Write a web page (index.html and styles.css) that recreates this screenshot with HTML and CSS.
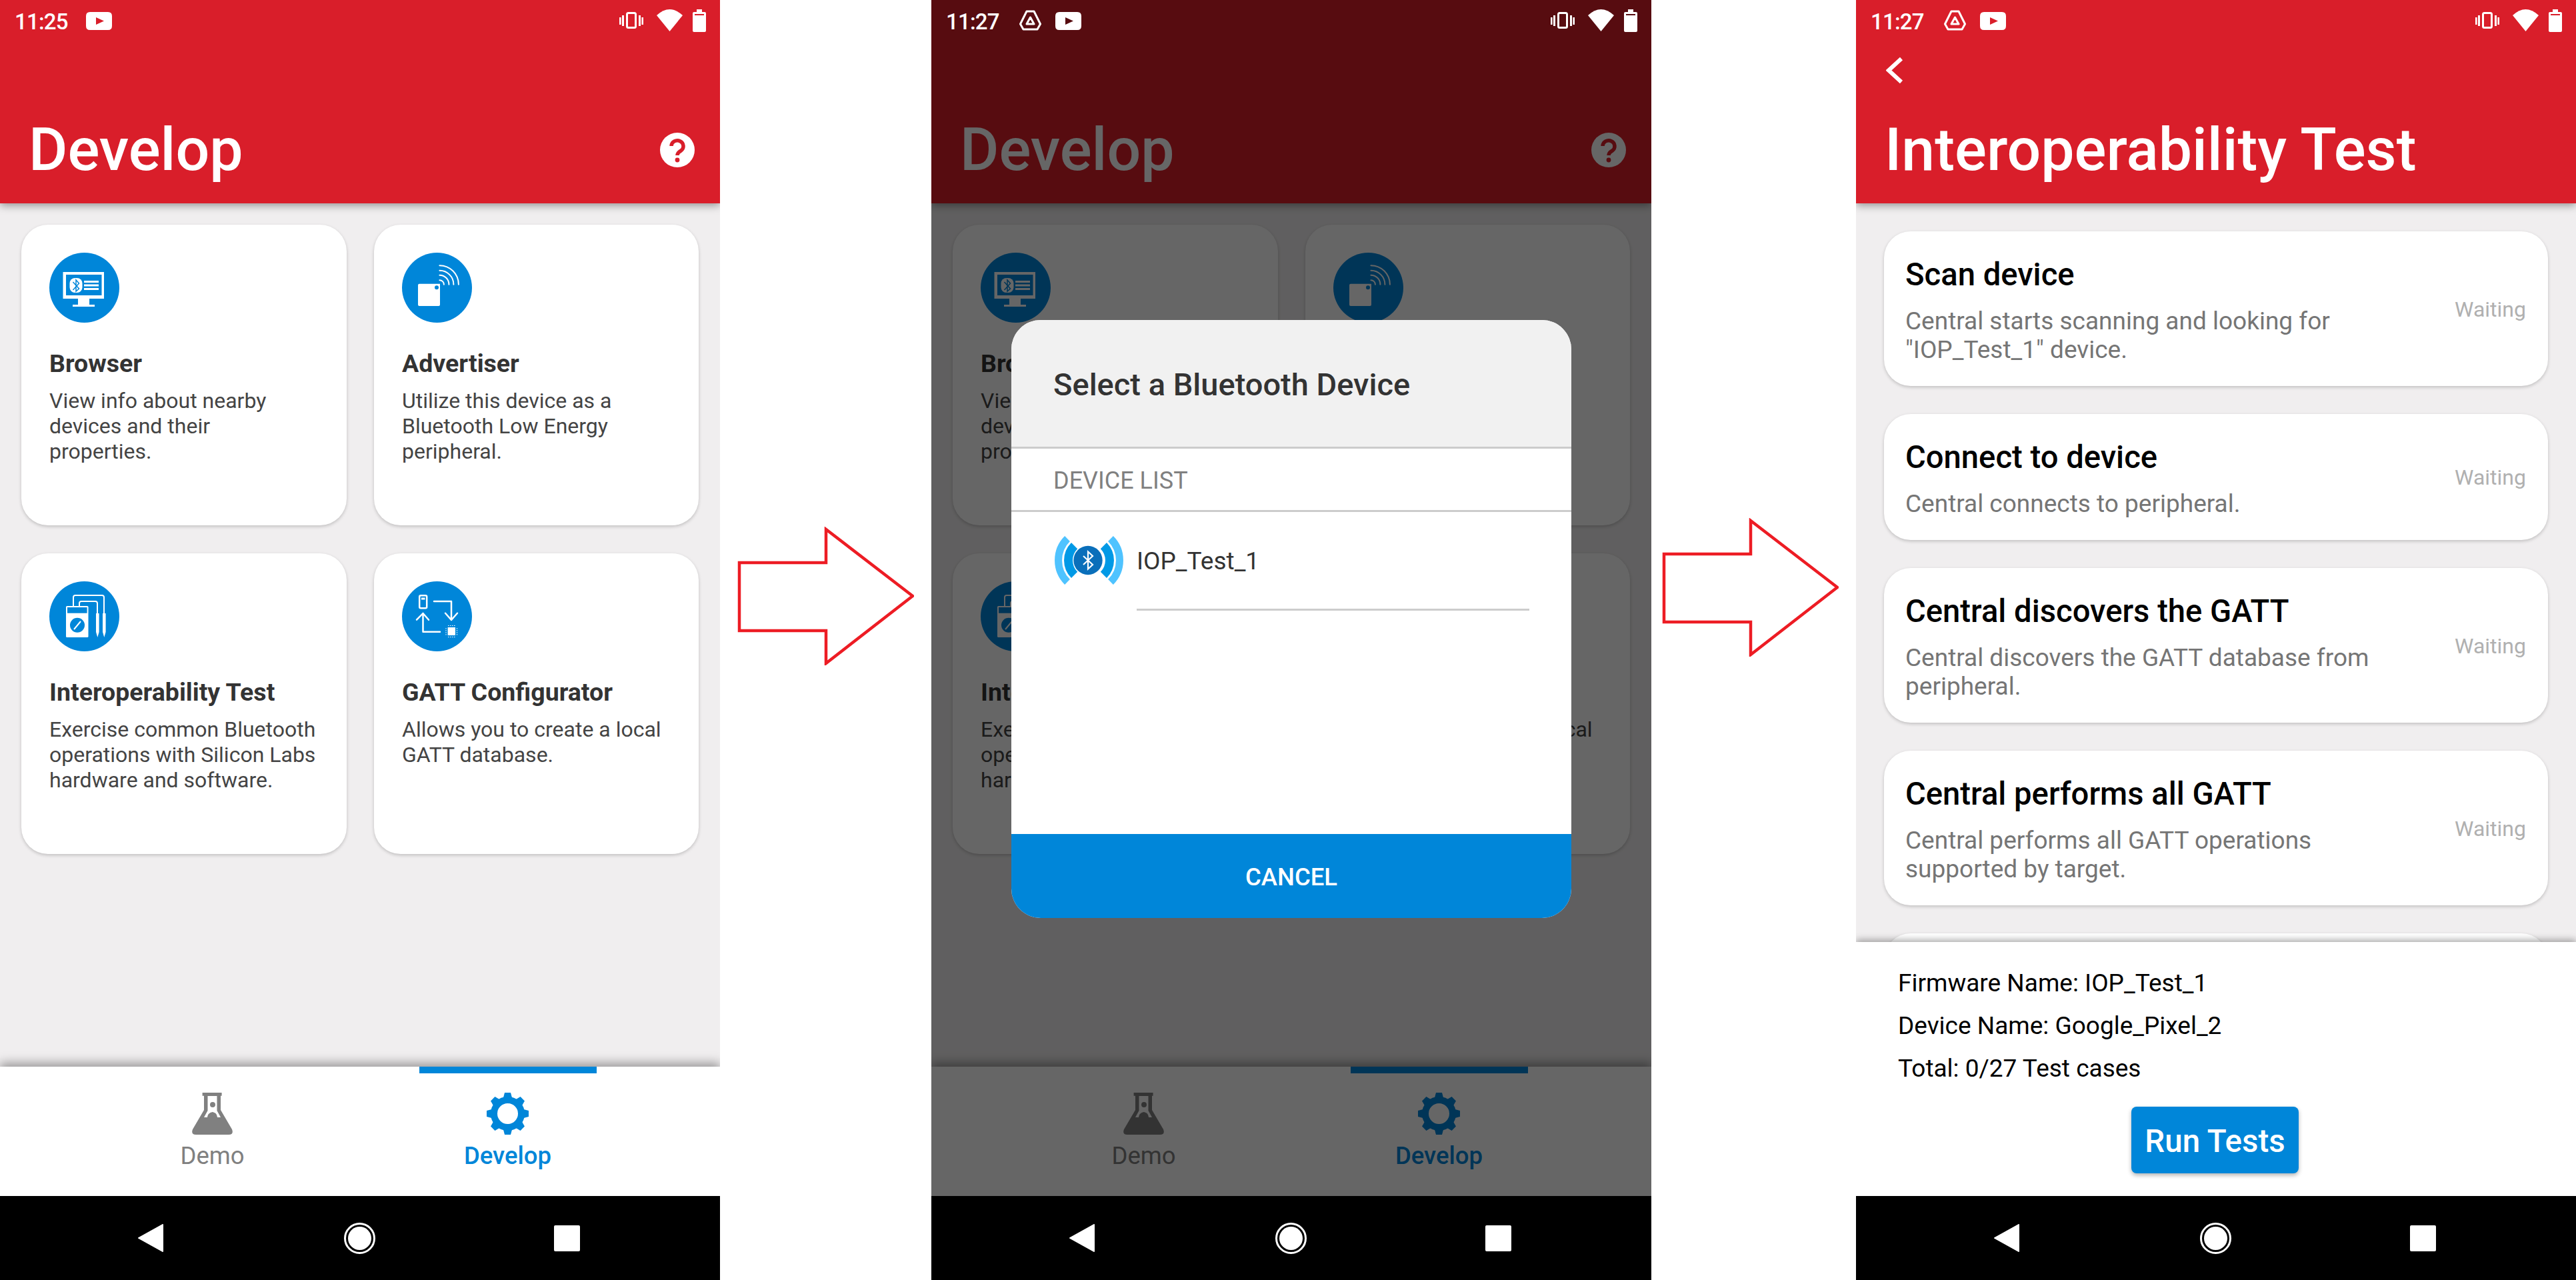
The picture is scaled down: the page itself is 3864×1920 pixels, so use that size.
FILE: index.html
```html
<!DOCTYPE html>
<html lang="en">
<head>
    <meta charset="UTF-8">
    <title>EFR Connect - Interoperability Test</title>
    <link rel="stylesheet" href="styles.css">
</head>
<body>
    <!-- icons used more than once -->
    <svg class="sprite" xmlns="http://www.w3.org/2000/svg">
        <symbol id="i-youtube" viewBox="0 0 39 27">
            <path fill="#fff" fill-rule="evenodd" d="M6 0H33Q39 0 39 6V21Q39 27 33 27H6Q0 27 0 21V6Q0 0 6 0ZM15 8V19L27 13.5Z"/>
        </symbol>
        <symbol id="i-drive" viewBox="0 0 33 31">
            <path fill="none" stroke="#fff" stroke-width="3" stroke-linejoin="round" d="M11 2H22L31.5 21L27 29H6L1.5 21ZM16.5 11L22 21H11Z"/>
        </symbol>
        <symbol id="i-vibrate" viewBox="0 0 36 25">
            <rect x="11.5" y="1.5" width="13" height="22" rx="2" fill="none" stroke="#fff" stroke-width="3"/>
            <path fill="#fff" d="M0 8H2.6V19H0ZM4 5H7V21H4ZM29 5H32V21H29ZM33.4 8H36V19H33.4Z"/>
        </symbol>
        <symbol id="i-wifi" viewBox="0 0 39 33">
            <path fill="#fff" d="M0 9Q19.500-9 39 9L19.500 33Z"/>
        </symbol>
        <symbol id="i-battery" viewBox="0 0 20 34">
            <path fill="#fff" fill-rule="evenodd" d="M6 0H14V4H18Q20 4 20 6V32Q20 34 18 34H2Q0 34 0 32V6Q0 4 2 4H6ZM3 7V9H17V7Z"/>
        </symbol>
        <symbol id="i-browser" viewBox="0 0 105 105">
            <circle cx="52.500" cy="52.500" r="52.500" fill="#0086d9"/>
            <path fill="#fff" fill-rule="evenodd" d="M20.500 29H82V69H60V78H68V81H35V78H43V69H20.500ZM25 33V64H78.500V33Z"/>
            <rect x="30.500" y="38" width="19" height="22" rx="8" fill="#fff"/>
            <path fill="none" stroke="#0086d9" stroke-width="1.500" d="M35.500 44L44.500 54L40 58V41L44.500 46L35.500 56"/>
            <path fill="#fff" d="M52 42H74V45H52ZM52 47.500H74V50.500H52ZM52 53H74V56H52Z"/>
        </symbol>
        <symbol id="i-advertiser" viewBox="0 0 105 105">
            <circle cx="52.500" cy="52.500" r="52.500" fill="#0086d9"/>
            <path fill="#fff" fill-rule="evenodd" d="M26 46.700H57V78Q57 80 55 80H26Q24 80 24 78V48.700Q24 46.700 26 46.700ZM52 49.200A3 3 0 1 0 52 55.200A3 3 0 1 0 52 49.200Z"/>
            <path fill="none" stroke="#fff" stroke-width="2" stroke-linecap="round" d="M56.400 41.200A6.500 6.500 0 0 1 62.900 47.700M56.400 33.700A14 14 0 0 1 70.400 47.700M56.400 26.700A21 21 0 0 1 77.400 47.700M56.400 19.200A28.500 28.500 0 0 1 84.900 47.700"/>
        </symbol>
        <symbol id="i-meter" viewBox="0 0 105 105">
            <circle cx="52.500" cy="52.500" r="52.500" fill="#0086d9"/>
            <path fill="none" stroke="#fff" stroke-width="2" d="M36 37V24Q36 21 39 21H79Q82 21 82 24V48M45 37V33Q45 30 48 30H69Q72 30 72 33V48"/>
            <rect x="25" y="37" width="33.500" height="47" rx="1.500" fill="#fff"/>
            <rect x="27" y="39" width="29.600" height="8.700" fill="#0086d9"/>
            <circle cx="42" cy="65.700" r="11" fill="#0086d9"/>
            <path stroke="#fff" stroke-width="2" d="M37 72L47 60"/>
            <path fill="#fff" d="M70 48H74.600V76L72.300 84L70 76ZM80 48H84.600V76L82.300 84L80 76Z"/>
        </symbol>
        <symbol id="i-gatt" viewBox="0 0 105 105">
            <circle cx="52.500" cy="52.500" r="52.500" fill="#0086d9"/>
            <rect x="26.200" y="21.200" width="11" height="19" rx="2" fill="none" stroke="#fff" stroke-width="2.500"/>
            <rect x="29" y="24.500" width="5.500" height="3" fill="#fff"/>
            <path fill="none" stroke="#fff" stroke-width="2.500" stroke-linecap="round" stroke-linejoin="round" d="M48 30H74V57.500M65 47.700L74 58L83 47.700M57 75.700H31.500V48M22 57.700L31.500 48L40 57.700"/>
            <rect x="68.600" y="69" width="11.400" height="12" fill="#fff"/>
            <path stroke="#fff" stroke-width="1" stroke-dasharray="1.500 1.500" d="M69 66.500H80M69 83.500H80M66 70V81M82.500 70V81"/>
        </symbol>
    </svg>

    <div class="page">
        <!-- Develop screen -->
        <section class="phone">
            <header class="appbar">
                <div class="statusbar">
                    <span class="clock">11:25</span>
                    <svg class="si-youtube"><use href="#i-youtube"/></svg>
                    <span class="status-right">
                        <svg class="si-vibrate"><use href="#i-vibrate"/></svg>
                        <svg class="si-wifi"><use href="#i-wifi"/></svg>
                        <svg class="si-battery"><use href="#i-battery"/></svg>
                    </span>
                </div>
                <div class="titlerow">
                    <h1>Develop</h1>
                    <svg class="help" viewBox="0 0 52 52"><circle cx="26" cy="26" r="26" fill="#fff"/><path fill="none" stroke="#d91e2a" stroke-width="5.500" d="M17 20A9 8.500 0 1 1 31.500 27C28 29 26 30.500 26 34"/><circle cx="26" cy="41" r="3.400" fill="#d91e2a"/></svg>
                </div>
            </header>
            <main class="grid">
                <div class="tile">
                    <svg class="tile-icon"><use href="#i-browser"/></svg>
                    <h2>Browser</h2>
                    <p>View info about nearby<br>devices and their<br>properties.</p>
                </div>
                <div class="tile">
                    <svg class="tile-icon"><use href="#i-advertiser"/></svg>
                    <h2>Advertiser</h2>
                    <p>Utilize this device as a<br>Bluetooth Low Energy<br>peripheral.</p>
                </div>
                <div class="tile">
                    <svg class="tile-icon"><use href="#i-meter"/></svg>
                    <h2>Interoperability Test</h2>
                    <p>Exercise common Bluetooth<br>operations with Silicon Labs<br>hardware and software.</p>
                </div>
                <div class="tile">
                    <svg class="tile-icon"><use href="#i-gatt"/></svg>
                    <h2>GATT Configurator</h2>
                    <p>Allows you to create a local<br>GATT database.</p>
                </div>
            </main>
            <nav class="tabs">
                <div class="tab">
                    <svg class="tab-icon" viewBox="0 0 61 63"><path fill="currentColor" fill-rule="evenodd" d="M15.600 0H44.600V4.700H43V26L60 55Q63 63 55 63H6Q-2 63 1 55L18 26V4.700H15.600ZM23.500 5V27L18 37H23C24 31 27 30 30.500 29C34 30 37 30 38 37H43L37.500 27V5ZM31 14A4 4 0 1 0 31 22A4 4 0 1 0 31 14Z"/></svg>
                    <span>Demo</span>
                </div>
                <div class="tab active">
                    <svg class="tab-icon" viewBox="-31.500 -31.500 63 63"><g fill="currentColor"><path id="tooth" d="M-6.500-24L-4.500-31.500H4.500L6.500-24Z"/><use href="#tooth" transform="rotate(45)"/><use href="#tooth" transform="rotate(90)"/><use href="#tooth" transform="rotate(135)"/><use href="#tooth" transform="rotate(180)"/><use href="#tooth" transform="rotate(225)"/><use href="#tooth" transform="rotate(270)"/><use href="#tooth" transform="rotate(315)"/></g><circle r="20.500" fill="none" stroke="currentColor" stroke-width="10"/></svg>
                    <span>Develop</span>
                </div>
            </nav>
            <footer class="navbar">
                <svg class="nav-back" viewBox="0 0 38 42"><path fill="#fff" stroke="#fff" stroke-width="2" stroke-linejoin="round" d="M37 1V41L1 21Z"/></svg>
                <svg class="nav-home" viewBox="0 0 47 47"><circle cx="23.500" cy="23.500" r="22" fill="none" stroke="#fff" stroke-width="3"/><circle cx="23.500" cy="23.500" r="17.500" fill="#fff"/></svg>
                <span class="nav-square"></span>
            </footer>
        </section>

        <div class="gutter gutter-one">
            <svg class="arrow" viewBox="0 0 266 208"><path d="M4 54H134V4L264 104L134 205V156H4Z"/></svg>
        </div>

        <!-- Develop screen with device picker on top -->
        <section class="phone">
            <header class="appbar">
                <div class="statusbar">
                    <span class="clock">11:27</span>
                    <svg class="si-drive"><use href="#i-drive"/></svg>
                    <svg class="si-youtube"><use href="#i-youtube"/></svg>
                    <span class="status-right">
                        <svg class="si-vibrate"><use href="#i-vibrate"/></svg>
                        <svg class="si-wifi"><use href="#i-wifi"/></svg>
                        <svg class="si-battery"><use href="#i-battery"/></svg>
                    </span>
                </div>
                <div class="titlerow">
                    <h1>Develop</h1>
                    <svg class="help" viewBox="0 0 52 52"><circle cx="26" cy="26" r="26" fill="#fff"/><path fill="none" stroke="#d91e2a" stroke-width="5.500" d="M17 20A9 8.500 0 1 1 31.500 27C28 29 26 30.500 26 34"/><circle cx="26" cy="41" r="3.400" fill="#d91e2a"/></svg>
                </div>
            </header>
            <main class="grid">
                <div class="tile">
                    <svg class="tile-icon"><use href="#i-browser"/></svg>
                    <h2>Browser</h2>
                    <p>View info about nearby<br>devices and their<br>properties.</p>
                </div>
                <div class="tile">
                    <svg class="tile-icon"><use href="#i-advertiser"/></svg>
                    <h2>Advertiser</h2>
                    <p>Utilize this device as a<br>Bluetooth Low Energy<br>peripheral.</p>
                </div>
                <div class="tile">
                    <svg class="tile-icon"><use href="#i-meter"/></svg>
                    <h2>Interoperability Test</h2>
                    <p>Exercise common Bluetooth<br>operations with Silicon Labs<br>hardware and software.</p>
                </div>
                <div class="tile">
                    <svg class="tile-icon"><use href="#i-gatt"/></svg>
                    <h2>GATT Configurator</h2>
                    <p>Allows you to create a local<br>GATT database.</p>
                </div>
            </main>
            <nav class="tabs">
                <div class="tab">
                    <svg class="tab-icon" viewBox="0 0 61 63"><path fill="currentColor" fill-rule="evenodd" d="M15.600 0H44.600V4.700H43V26L60 55Q63 63 55 63H6Q-2 63 1 55L18 26V4.700H15.600ZM23.500 5V27L18 37H23C24 31 27 30 30.500 29C34 30 37 30 38 37H43L37.500 27V5ZM31 14A4 4 0 1 0 31 22A4 4 0 1 0 31 14Z"/></svg>
                    <span>Demo</span>
                </div>
                <div class="tab active">
                    <svg class="tab-icon" viewBox="-31.500 -31.500 63 63"><g fill="currentColor"><path id="tooth2" d="M-6.500-24L-4.500-31.500H4.500L6.500-24Z"/><use href="#tooth2" transform="rotate(45)"/><use href="#tooth2" transform="rotate(90)"/><use href="#tooth2" transform="rotate(135)"/><use href="#tooth2" transform="rotate(180)"/><use href="#tooth2" transform="rotate(225)"/><use href="#tooth2" transform="rotate(270)"/><use href="#tooth2" transform="rotate(315)"/></g><circle r="20.500" fill="none" stroke="currentColor" stroke-width="10"/></svg>
                    <span>Develop</span>
                </div>
            </nav>
            <div class="dim"></div>
            <div class="dialog">
                <div class="dialog-head">Select a Bluetooth Device</div>
                <div class="dialog-label">DEVICE LIST</div>
                <div class="dialog-body">
                    <div class="device">
                        <svg class="device-icon" viewBox="0 0 103 73">
                            <g fill="none" stroke-width="13" stroke="#0099e6"><path d="M29.600 14.600A31 31 0 0 0 29.600 58.400"/><path d="M73.400 14.600A31 31 0 0 1 73.400 58.400"/></g>
                            <g fill="none" stroke-width="11" stroke="#4fc3ff"><path d="M19 4A46 46 0 0 0 19 69"/><path d="M84 4A46 46 0 0 1 84 69"/></g>
                            <circle cx="50" cy="36.500" r="21.700" fill="#0a6fba"/>
                            <path fill="none" stroke="#fff" stroke-width="2.200" d="M43 30L57 43L50 49.500V23.500L57 30L43 43"/>
                        </svg>
                        <div class="device-name">IOP_Test_1</div>
                    </div>
                </div>
                <div class="dialog-cancel">CANCEL</div>
            </div>
            <footer class="navbar">
                <svg class="nav-back" viewBox="0 0 38 42"><path fill="#fff" stroke="#fff" stroke-width="2" stroke-linejoin="round" d="M37 1V41L1 21Z"/></svg>
                <svg class="nav-home" viewBox="0 0 47 47"><circle cx="23.500" cy="23.500" r="22" fill="none" stroke="#fff" stroke-width="3"/><circle cx="23.500" cy="23.500" r="17.500" fill="#fff"/></svg>
                <span class="nav-square"></span>
            </footer>
        </section>

        <div class="gutter gutter-two">
            <svg class="arrow" viewBox="0 0 266 208"><path d="M4 54H134V4L264 104L134 205V156H4Z"/></svg>
        </div>

        <!-- Interoperability test screen -->
        <section class="phone">
            <header class="appbar">
                <div class="statusbar">
                    <span class="clock">11:27</span>
                    <svg class="si-drive"><use href="#i-drive"/></svg>
                    <svg class="si-youtube"><use href="#i-youtube"/></svg>
                    <span class="status-right">
                        <svg class="si-vibrate"><use href="#i-vibrate"/></svg>
                        <svg class="si-wifi"><use href="#i-wifi"/></svg>
                        <svg class="si-battery"><use href="#i-battery"/></svg>
                    </span>
                </div>
                <svg class="back" viewBox="0 0 26 41"><path fill="none" stroke="#fff" stroke-width="6" d="M23 3L4 20.500L23 38"/></svg>
                <div class="titlerow">
                    <h1>Interoperability Test</h1>
                </div>
            </header>
            <main class="tests">
                <div class="test">
                    <div class="test-text">
                        <h3>Scan device</h3>
                        <p>Central starts scanning and looking for<br>"IOP_Test_1" device.</p>
                    </div>
                    <span class="waiting">Waiting</span>
                </div>
                <div class="test">
                    <div class="test-text">
                        <h3>Connect to device</h3>
                        <p>Central connects to peripheral.</p>
                    </div>
                    <span class="waiting">Waiting</span>
                </div>
                <div class="test">
                    <div class="test-text">
                        <h3>Central discovers the GATT</h3>
                        <p>Central discovers the GATT database from<br>peripheral.</p>
                    </div>
                    <span class="waiting">Waiting</span>
                </div>
                <div class="test">
                    <div class="test-text">
                        <h3>Central performs all GATT</h3>
                        <p>Central performs all GATT operations<br>supported by target.</p>
                    </div>
                    <span class="waiting">Waiting</span>
                </div>
                <div class="test test-cut"></div>
            </main>
            <div class="info">
                <div class="info-line">Firmware Name: IOP_Test_1</div>
                <div class="info-line">Device Name: Google_Pixel_2</div>
                <div class="info-line">Total: 0/27 Test cases</div>
                <button class="run" type="button">Run Tests</button>
            </div>
            <footer class="navbar">
                <svg class="nav-back" viewBox="0 0 38 42"><path fill="#fff" stroke="#fff" stroke-width="2" stroke-linejoin="round" d="M37 1V41L1 21Z"/></svg>
                <svg class="nav-home" viewBox="0 0 47 47"><circle cx="23.500" cy="23.500" r="22" fill="none" stroke="#fff" stroke-width="3"/><circle cx="23.500" cy="23.500" r="17.500" fill="#fff"/></svg>
                <span class="nav-square"></span>
            </footer>
        </section>
    </div>
</body>
</html>
```

FILE: styles.css
```css
* {
    box-sizing: border-box;
}

body {
    margin: 0;
    background-color: #fff;
    font-family: Roboto, "Liberation Sans", sans-serif;
    overflow: hidden;
}

h1, h2, h3, p {
    margin: 0;
}

svg {
    display: block;
    flex-shrink: 0;
}

.sprite {
    display: none;
}

.page {
    display: flex;
    width: 3864px;
    height: 1920px;
}

.phone {
    position: relative;
    display: flex;
    flex-direction: column;
    width: 1080px;
    height: 1920px;
    flex-shrink: 0;
    overflow: hidden;
    background-color: #f0eeef;
}

/* arrows between the phones */
.gutter {
    flex-shrink: 0;
}

.gutter-one {
    width: 317px;
    padding: 790px 0 0 25px;
}

.gutter-two {
    width: 307px;
    padding: 777px 0 0 15px;
}

.arrow {
    width: 266px;
    height: 208px;
}

.arrow path {
    fill: #fff;
    stroke: #ed1c24;
    stroke-width: 4.500;
}

/* red header */
.appbar {
    position: relative;
    display: flex;
    flex-direction: column;
    height: 305px;
    flex-shrink: 0;
    background-color: #d91e2a;
    box-shadow: 0 3px 12px rgba(0, 0, 0, 0.4);
}

.statusbar {
    position: relative;
    z-index: 2;
    display: flex;
    align-items: flex-start;
    height: 64px;
    padding-left: 22px;
    color: #fff;
}

.clock {
    width: 80px;
    margin-top: 14px;
    font-size: 33px;
    font-weight: 500;
    line-height: 38px;
    letter-spacing: -0.8px;
}

.si-drive {
    width: 33px;
    height: 31px;
    margin: 15px 0 0 30px;
}

.si-drive + .si-youtube {
    margin-left: 21px;
}

.si-youtube {
    width: 39px;
    height: 27px;
    margin: 18px 0 0 27px;
}

.status-right {
    position: relative;
    display: flex;
    margin-left: auto;
    padding-right: 21px;
}

.si-vibrate {
    width: 36px;
    height: 25px;
    margin-top: 18px;
}

.si-wifi {
    width: 39px;
    height: 33px;
    margin: 14px 15px 0 20px;
}

.si-battery {
    width: 20px;
    height: 34px;
    margin-top: 14px;
}

.back {
    width: 26px;
    height: 41px;
    margin: 21px 0 0 45px;
}

.titlerow {
    display: flex;
    align-items: center;
    justify-content: space-between;
    margin-top: auto;
    padding: 0 38px 30px 43px;
}

.titlerow h1 {
    font-size: 89.500px;
    font-weight: 500;
    line-height: 100px;
    color: #fff;
}

.help {
    width: 52px;
    height: 52px;
}

/* feature tiles */
.grid {
    display: grid;
    grid-template-columns: 488px 487px;
    grid-auto-rows: 451px;
    gap: 42px 41px;
    flex: 1;
    padding: 32px 0 0 32px;
}

.tile {
    padding: 42px 30px 0 42px;
    background-color: #fff;
    border-radius: 40px;
    box-shadow: 0 2px 5px rgba(0, 0, 0, 0.2);
}

.tile-icon {
    width: 105px;
    height: 105px;
}

.tile h2 {
    margin-top: 39px;
    font-size: 37.500px;
    font-weight: 700;
    line-height: 44px;
    color: #333;
}

.tile p {
    margin-top: 15px;
    font-size: 32px;
    line-height: 38px;
    color: #444;
}

/* bottom tabs */
.tabs {
    position: relative;
    display: flex;
    justify-content: center;
    gap: 177px;
    height: 194px;
    flex-shrink: 0;
    background-color: #fff;
    box-shadow: 0 -6px 14px rgba(0, 0, 0, 0.35);
}

.tab {
    display: flex;
    flex-direction: column;
    align-items: center;
    width: 266px;
    padding-top: 29px;
    border-top: 10px solid transparent;
    font-size: 36.500px;
    line-height: 42px;
    color: #808080;
}

.tab span {
    margin-top: 11px;
}

.tab.active {
    border-top-color: #0086d9;
    font-weight: 500;
    color: #0086d9;
}

.tab-icon {
    width: 63px;
    height: 63px;
}

/* android buttons */
.navbar {
    position: relative;
    z-index: 2;
    display: flex;
    align-items: center;
    gap: 271px;
    height: 126px;
    flex-shrink: 0;
    padding-left: 207px;
    background-color: #000;
}

.nav-back {
    width: 38px;
    height: 42px;
}

.nav-home {
    width: 47px;
    height: 47px;
    margin-right: -3px;
}

.nav-square {
    width: 39px;
    height: 39px;
    background-color: #fff;
    border-radius: 2px;
}

/* device picker */
.dim {
    position: absolute;
    inset: 0;
    z-index: 1;
    background-color: rgba(0, 0, 0, 0.6);
}

.dialog {
    position: absolute;
    left: 120px;
    top: 480px;
    z-index: 2;
    display: flex;
    flex-direction: column;
    width: 840px;
    height: 897px;
    overflow: hidden;
    background-color: #fff;
    border-radius: 44px;
}

.dialog-head {
    height: 193px;
    padding: 70px 0 0 63px;
    background-color: #f1f1f1;
    border-bottom: 3px solid #ccc;
    font-size: 47px;
    font-weight: 500;
    line-height: 54px;
    color: #333;
}

.dialog-label {
    height: 95px;
    padding: 28px 0 0 63px;
    border-bottom: 3px solid #ccc;
    font-size: 36px;
    line-height: 41px;
    color: #808080;
}

.dialog-body {
    flex: 1;
    padding: 36px 63px 0 65px;
}

.device {
    display: flex;
    gap: 20px;
}

.device-icon {
    width: 103px;
    height: 73px;
}

.device-name {
    flex: 1;
    margin-top: 16px;
    padding-bottom: 49px;
    border-bottom: 3px solid #ccc;
    font-size: 37px;
    line-height: 44px;
    color: #333;
}

.dialog-cancel {
    height: 126px;
    padding-top: 2px;
    background-color: #0086d9;
    font-size: 36.500px;
    font-weight: 500;
    line-height: 126px;
    text-align: center;
    color: #fff;
}

/* test list */
.tests {
    display: flex;
    flex-direction: column;
    gap: 42px;
    flex: 1;
    min-height: 0;
    padding: 42px 42px 0;
    overflow: hidden;
}

.test {
    display: flex;
    align-items: center;
    justify-content: space-between;
    flex-shrink: 0;
    padding: 38px 33px 33px 32px;
    background-color: #fff;
    border-radius: 40px;
    box-shadow: 0 2px 5px rgba(0, 0, 0, 0.2);
}

.test-cut {
    height: 232px;
}

.test h3 {
    font-size: 47.200px;
    font-weight: 500;
    line-height: 54px;
    color: #000;
}

.test p {
    margin-top: 21px;
    font-size: 37px;
    line-height: 43px;
    color: #757575;
}

.waiting {
    margin-bottom: 4px;
    font-size: 32px;
    line-height: 38px;
    color: #b0b0b0;
}

/* summary under the list */
.info {
    position: relative;
    display: flex;
    flex-direction: column;
    height: 381px;
    flex-shrink: 0;
    padding: 30px 0 0 63px;
    background-color: #fff;
    box-shadow: 0 -3px 10px rgba(0, 0, 0, 0.35);
}

.info-line {
    font-size: 37px;
    line-height: 64px;
    color: #000;
}

.run {
    align-self: flex-start;
    width: 251px;
    height: 100px;
    margin: 25px 0 0 350px;
    padding-top: 4px;
    background-color: #0086d9;
    border: none;
    border-radius: 8px;
    box-shadow: 0 3px 6px rgba(0, 0, 0, 0.3);
    font-family: inherit;
    font-size: 47.500px;
    font-weight: 500;
    color: #fff;
}
```
